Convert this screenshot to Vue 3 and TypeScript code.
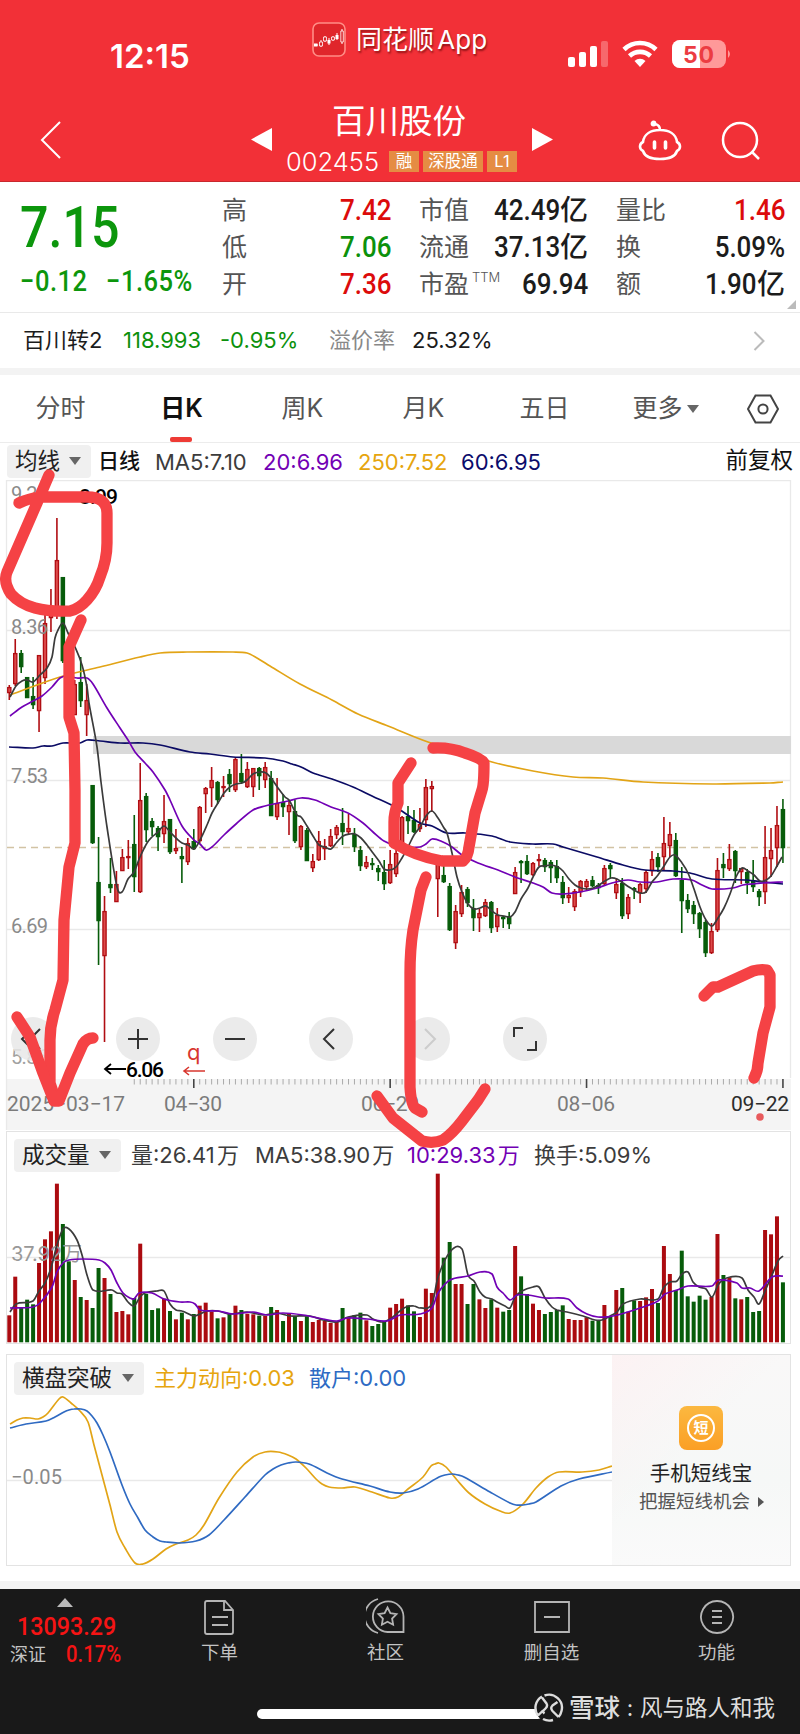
<template>
  <div class="page">
    <!-- 顶部红色区域 -->
    <header class="header">
      <div class="status-bar">
        <span class="clock">12:15</span>
        <div class="app-name">
          <svg width="34" height="35" viewBox="0 0 34 35">
            <rect x="1" y="1" width="32" height="33" rx="6" fill="#e0262b" stroke="#ff8d86" stroke-width="1.6" />
            <path d="M3 23h3M9 18v7M13 14v6M17 16v7M21 14v5M25 11v7M30 7v15" stroke="#fff" stroke-width="1" />
            <path d="M2 21.500h3.500v3H2zM15.500 18h3v3.500h-3zM23.500 13h3v4h-3z" fill="#fff" />
            <path d="M7.500 20h3v4h-3zM11.500 15h3v4h-3zM19.500 15h3v3h-3zM28.800 9h2.500v11h-2.500z" fill="#d9262b" stroke="#fff" stroke-width=".8" />
          </svg>
          <span>同花顺 App</span>
        </div>
        <svg class="signals" width="164" height="30" viewBox="0 0 164 30">
          <rect x="0" y="17" width="7" height="10" rx="2" fill="#fff" />
          <rect x="11" y="12" width="7" height="15" rx="2" fill="#fff" />
          <rect x="22" y="6" width="7" height="21" rx="2" fill="#fff" />
          <rect x="33" y="1" width="7" height="26" rx="2" fill="#f7686c" />
          <path d="M56 9.500a23 23 0 0 1 32 0M61.500 16a15.500 15.500 0 0 1 21 0" fill="none" stroke="#fff" stroke-width="4.600" />
          <path d="M72 27l-5.500-6a8 8 0 0 1 11 0z" fill="#fff" />
          <rect x="104" y="0" width="54" height="28" rx="8" fill="#f99" />
          <path d="M112 0h20v28h-20a8 8 0 0 1-8-8V8a8 8 0 0 1 8-8z" fill="#fff" />
          <path d="M160 10q4 4 0 8z" fill="#f99" />
          <text x="115" y="22.500" class="battery-text" textLength="31">50</text>
        </svg>
      </div>
      <div class="title-bar">
        <svg class="back" width="22" height="38" viewBox="0 0 22 38"><path d="M20 1L2 19l18 18" fill="none" stroke="#fff" stroke-width="2" /></svg>
        <svg class="prev" width="21" height="25" viewBox="0 0 21 25"><path d="M21 1v23L0 12.500z" fill="#fff" /></svg>
        <div class="stock">
          <div class="stock-name">百川股份</div>
          <div class="stock-code">
            <span class="code">002455</span>
            <i class="tag">融</i>
            <i class="tag wide">深股通</i>
            <i class="tag">L1</i>
          </div>
        </div>
        <svg class="next" width="21" height="25" viewBox="0 0 21 25"><path d="M0 1v23l21-11.500z" fill="#fff" /></svg>
        <svg class="robot" width="44" height="41" viewBox="0 0 44 41" fill="none" stroke="#fff" stroke-width="2.600">
          <path d="M22 10c-9 0-16 4-17 12-4 2-4 7 0 9 2 6 9 8 17 8s15-2 17-8c4-2 4-7 0-9-1-8-8-12-17-12zM22 10q0-5-5-6" />
          <circle cx="15.500" cy="3.500" r="1.600" fill="#fff" />
          <path d="M16.500 22v6M27.500 22v6" stroke-width="3.600" stroke-linecap="round" />
        </svg>
        <svg class="search" width="40" height="40" viewBox="0 0 40 40" fill="none" stroke="#fff" stroke-width="2.500">
          <circle cx="19" cy="19" r="17" /><path d="M31 31l7 7" />
        </svg>
      </div>
    </header>

    <!-- 行情数据 -->
    <section class="quote">
      <div class="price-box">
        <div class="price din">7.15</div>
        <div class="change"><span class="din">−0.12</span><span class="din">−1.65%</span></div>
      </div>
      <div v-for="(col, c) in stats" :key="c" class="stat-col">
        <div v-for="s in col" :key="s.label" class="stat">
          <span class="stat-label">{{ s.label }}<sup v-if="s.sup">{{ s.sup }}</sup></span>
          <span class="din stat-value" :class="s.tone">{{ s.value }}</span>
          <b v-if="s.unit" class="unit">{{ s.unit }}</b>
        </div>
      </div>
      <i class="corner"></i>
    </section>

    <section class="bond">
      <span>百川转2</span>
      <span class="down">118.993</span>
      <span class="down">-0.95%</span>
      <span class="muted">溢价率</span>
      <span>25.32%</span>
      <svg width="12" height="20" viewBox="0 0 12 20"><path d="M1.500 1l9 9-9 9" fill="none" stroke="#bbb" stroke-width="2" /></svg>
    </section>

    <nav class="tabs">
      <span v-for="t in tabs" :key="t" class="tab" :class="{ active: t === '日K' }">{{ t }}<i v-if="t === '更多'" class="caret small"></i></span>
      <svg width="32" height="30" viewBox="0 0 32 30" fill="none" stroke="#444" stroke-width="2">
        <path d="M8.500 1.500h15L31 15l-7.500 13.500h-15L1 15z" /><circle cx="16" cy="15" r="4.600" />
      </svg>
    </nav>

    <!-- 均线 -->
    <div class="ma-row">
      <span class="select">均线<i class="caret"></i></span>
      <span class="period">日线</span>
      <span class="c-dark">MA5:7.10</span>
      <span class="c-purple">20:6.96</span>
      <span class="c-gold">250:7.52</span>
      <span class="c-navy">60:6.95</span>
      <span class="adjust">前复权</span>
    </div>

    <!-- K线图 -->
    <section class="kline">
      <svg width="800" height="651" viewBox="0 480 800 651">
        <rect x="7" y="1079" width="784" height="51" fill="#f4f4f4" />
        <path d="M6.500 1130V480.500H790.500V1078M6.500 630.500H790M6.500 780.500H790M6.500 929.500H790" class="frame" />
        <rect x="93" y="736" width="698" height="18" fill="#d9d9d9" />
        <path d="M7 847.500H790" stroke="#d2c3a4" stroke-width="1.300" stroke-dasharray="7 5" />
        <g v-for="(k, i) in candles" :key="i" :stroke="k.color" :fill="k.fill">
          <path :d="`M${k.x} ${k.high}V${k.low}`" stroke-width="1.600" />
          <rect :x="k.x - 1.600" :y="k.top" width="3.200" :height="k.height" stroke-width="1.300" />
        </g>
        <g class="axis-label">
          <text x="11" y="501" textLength="37">9.20</text>
          <text x="11" y="633.500" textLength="37">8.36</text>
          <text x="11" y="783" textLength="37">7.53</text>
          <text x="11" y="932.500" textLength="37">6.69</text>
          <text x="11" y="1064" textLength="37" opacity=".8">5.86</text>
        </g>
        <path :d="smooth(ma250)" class="line gold" />
        <path :d="smooth(ma60)" class="line navy" />
        <path :d="smooth(ma20)" class="line purple" />
        <path :d="smooth(ma5)" class="line dark" />
        <text x="79" y="504" textLength="39" class="mark">8.99</text>
      </svg>
      <div class="tools">
        <button v-for="(d, i) in tools" :key="i" class="tool" :class="{ off: i === 4 }">
          <svg width="44" height="44" viewBox="0 0 44 44"><path :d="d" /></svg>
        </button>
      </div>
      <svg class="marks" width="800" height="651" viewBox="0 480 800 651">
        <path d="M105 1069h21M111 1064l-6 5 6 5" fill="none" stroke="#000" stroke-width="1.800" />
        <text x="126" y="1077" textLength="38" class="mark">6.06</text>
        <text x="187" y="1060" class="q-mark">q</text>
        <path d="M184 1071h21M189 1067l-5 4 5 4" fill="none" stroke="#d8372f" stroke-width="1.600" />
        <path v-for="t in ticks" :key="t.x" :d="`M${t.x} 1079v${t.major ? 9 : 5.500}`" :stroke="t.major ? '#444' : '#aaa'" :stroke-width="t.major ? 1.600 : 1" />
        <g class="date">
          <text x="7" y="1111" textLength="118">2025−03−17</text>
          <text x="164" y="1111" textLength="58">04−30</text>
          <text x="361" y="1111" textLength="58">06−20</text>
          <text x="557" y="1111" textLength="58">08−06</text>
          <text x="731" y="1111" textLength="58" class="today">09−22</text>
        </g>
      </svg>
    </section>

    <!-- 成交量 -->
    <section class="panel volume">
      <div class="panel-head vol-head">
        <span class="select">成交量<i class="caret"></i></span>
        <span class="c-dark">量:26.41 万</span>
        <span class="c-dark">MA5:38.90 万</span>
        <span class="c-purple">10:29.33 万</span>
        <span class="c-dark">换手:5.09%</span>
      </div>
      <svg class="plot" width="784" height="170" viewBox="7 1173 784 170">
        <path d="M7 1257.500H790" class="frame" />
        <rect v-for="(v, i) in volumes" :key="i" :x="v.x - 2" :y="v.y" width="4" :height="1342.300 - v.y" :fill="v.color" />
        <text x="11" y="1261" class="axis-num" textLength="71">37.92万</text>
        <path :d="smooth(volMa5)" class="line dark" />
        <path :d="smooth(volMa10)" class="line purple" />
      </svg>
    </section>

    <!-- 横盘突破 -->
    <section class="panel trend">
      <div class="trend-main">
        <div class="panel-head trend-head">
          <span class="select">横盘突破<i class="caret"></i></span>
          <span class="c-gold">主力动向:0.03</span>
          <span class="c-blue">散户:0.00</span>
        </div>
        <svg class="plot" width="605" height="169" viewBox="7 1396 605 169">
          <path d="M7 1480.500H612" class="frame" />
          <text x="11" y="1484" class="axis-label" textLength="51">−0.05</text>
          <path :d="smooth(mainForce)" class="line gold" />
          <path :d="smooth(retail)" class="line blue" />
        </svg>
      </div>
      <aside class="promo">
        <div class="promo-icon"><span>短</span></div>
        <div class="promo-title">手机短线宝</div>
        <div class="promo-sub">把握短线机会<i class="play"></i></div>
      </aside>
    </section>

    <!-- 底部导航 -->
    <footer class="footer">
      <div class="footer-row">
        <div class="index">
          <i class="rise"></i>
          <div class="index-value"><span class="din">13093.29</span></div>
          <div class="index-sub"><span>深证</span><span class="din pct">0.17%</span></div>
        </div>
        <div v-for="n in navs" :key="n.text" class="nav-item">
          <svg width="40" height="38" viewBox="0 0 40 38"><path :d="n.icon" /></svg>
          <span>{{ n.text }}</span>
        </div>
      </div>
      <div class="home-row">
        <i class="home-bar"></i>
        <div class="watermark">
          <svg width="30" height="30" viewBox="0 0 30 30">
            <circle cx="15" cy="14.500" r="14" class="disc" />
            <path d="M8 3.500A13 13 0 0 0 4 22.500M10.500 2.500A13 13 0 0 1 27.500 18M24.500 24A13 13 0 0 0 27.500 18M9 26A13 13 0 0 0 19 27M8 4.500L12.500 10.500Q14 13 11.500 15.500L9.500 17.500Q8.500 19 10.500 20.500M4 22.500L9 17.500M23.500 9L18.500 12.500Q16 15 18.500 18L24.500 24" />
          </svg>
          <b>雪球</b><span class="colon">:</span><span>风与路人和我</span>
        </div>
      </div>
    </footer>

    <!-- 手绘标注 -->
    <svg class="doodle" width="800" height="1160" viewBox="0 0 800 1160">
      <path v-for="d in strokes" :key="d" :d="d" />
      <circle cx="760" cy="1117" r="3.800" />
    </svg>
  </div>
</template>

<script setup lang="ts">
interface Stat {
  label: string
  value: string
  tone?: 'up' | 'down'
  unit?: string
  sup?: string
}

const stats: Stat[][] = [
  [
    { label: '高', value: '7.42', tone: 'up' },
    { label: '低', value: '7.06', tone: 'down' },
    { label: '开', value: '7.36', tone: 'up' }
  ],
  [
    { label: '市值', value: '42.49', unit: '亿' },
    { label: '流通', value: '37.13', unit: '亿' },
    { label: '市盈', value: '69.94', sup: 'TTM' }
  ],
  [
    { label: '量比', value: '1.46', tone: 'up' },
    { label: '换', value: '5.09%' },
    { label: '额', value: '1.90', unit: '亿' }
  ]
]

const tabs = ['分时', '日K', '周K', '月K', '五日', '更多']

// 每根K线的横坐标
const px = (i: number) => +(9.3 + i * 5.951).toFixed(2)

// 颜色, 最高, 实体上沿, 实体下沿, 最低
const rawCandles = `r685,687,693,700 r639,653,684,686 g650,653,667,673 g677,677,698,698 g677,696,705,709 r655,655,711,732
r613,623,678,684 r589,612,618,632 r518,560,612,619 g577,577,661,663 g655,670,700,710 r680,684,715,715 g657,682,701,707
r684,700,715,736 g785,785,843,844 g837,882,921,965 r896,911,956,1042 g858,884,888,893 r871,884,902,902 r849,857,871,871
r840,856,858,869 g815,844,877,892 r763,800,892,893 g793,796,830,842 g818,821,827,836 g826,828,837,851 r795,821,834,843
g819,819,852,854 r829,848,851,854 g847,856,859,883 r838,843,862,865 g829,841,849,850 r806,807,841,843 r787,788,794,813
r767,780,788,807 g781,782,800,804 r776,786,788,797 g769,774,784,792 r757,759,790,792 g754,773,782,784 r762,769,787,788
r768,768,787,797 g767,768,776,790 r762,767,780,788 g771,778,816,816 r778,803,817,820 g794,802,807,817 r801,805,812,835
g800,811,841,843 r825,826,847,850 g828,830,861,861 r854,861,868,872 r831,841,860,861 r839,846,849,860 r829,836,846,847
r825,827,835,839 g808,823,832,845 r814,828,832,835 g828,834,847,852 g846,850,866,871 r856,862,867,869 g858,863,864,870
g865,868,872,881 g860,872,884,890 r850,864,883,884 r845,853,874,877 r816,817,850,852 g806,816,821,834 g810,820,832,833
r808,824,829,832 r779,787,820,827 r781,786,789,812 r860,860,879,917 g862,875,882,883 g883,886,930,931 r905,911,943,949
r885,892,914,917 g887,889,903,907 g899,908,918,931 r909,913,918,932 r899,902,916,917 g901,902,928,933 r908,915,927,932
g916,917,919,928 g912,916,924,929 r867,872,894,894 g860,861,863,883 g855,861,874,875 r862,863,875,876 r854,859,861,866
g858,860,867,872 g860,862,868,883 g860,866,878,883 g876,882,898,904 r887,895,898,903 r889,891,907,911 r880,881,892,897
r879,881,887,890 g876,880,886,887 g883,885,888,894 r865,868,884,885 g863,865,869,878 r878,884,893,899 g878,883,916,919
r894,897,914,919 g887,888,890,899 r883,884,893,903 r870,872,889,893 r851,859,871,876 g853,857,867,872 r817,843,857,870
r822,834,846,857 g833,840,876,877 g867,880,901,933 g894,900,909,913 g901,905,914,924 g912,913,929,938 g920,922,953,957
r923,931,953,954 r858,870,930,932 g853,864,868,878 r844,859,869,871 g850,851,871,883 r868,868,872,884 g869,872,883,894
g860,880,887,892 g889,891,897,906 r826,857,892,904 r828,850,859,877 r806,825,848,867 g799,809,848,863`

const candles = rawCandles.split(/\s+/).map((s, i) => {
  const [high, top, bottom, low] = s.slice(1).split(',').map(Number)
  const red = s[0] === 'r'
  return {
    x: px(i),
    high,
    low,
    top: top + 0.6,
    height: Math.max(bottom - top - 1, 1),
    color: red ? '#b00d12' : '#075c0a',
    fill: red ? '#dc4a4a' : '#075c0a'
  }
})

// 成交量柱顶位置
const rawVolumes = `r571 r455 g548 g524 g538 r414 r343 r319 r176 g297 g409 r465 g516 r525 g549 g429 r459 g507 r561 r558 r568 g519
r356 g507 g555 g550 r521 g558 r583 g563 r583 g567 r542 r533 r560 g580 r577 g567 r542 g555 r566 r568 g572 r573 g546 r555
g588 r564 g573 r588 g574 r591 r585 r588 r594 r590 g549 r578 g570 g563 r586 g603 g597 g590 r548 r537 r521 g541 g559 r576
r491 r504 r146 g398 g351 r477 r477 g537 g477 r523 r549 g523 r548 g560 g555 r363 g454 g507 r536 r555 g567 g561 g555 g541
r582 r585 r585 r577 g587 g585 r540 g574 r495 g489 r560 g526 r528 r517 r492 g534 r363 r447 g495 g377 g514 g530 g512 g524
r516 r327 g450 r457 g520 r523 g516 g561 g558 r315 r328 r274 g472`

const volumes = rawVolumes.split(/\s+/).map((s, i) => ({
  x: px(i),
  y: 1125 + Number(s.slice(1)) / 3,
  color: s[0] === 'r' ? '#ab0b10' : '#075c0a'
}))

const ticks = Array.from({ length: 110 }, (_, n) => {
  const i = n + 21
  return { x: px(i), major: [31, 64, 97, 130].includes(i) }
})

// 折线转平滑曲线
const smooth = (points: string) => {
  const p = points.split(' ').map((s) => s.split(',').map(Number))
  let d = `M${p[0]}`
  for (let i = 0; i < p.length - 1; i++) {
    const a = p[Math.max(i - 1, 0)]
    const b = p[i]
    const c = p[i + 1]
    const e = p[Math.min(i + 2, p.length - 1)]
    const w = c[0] - b[0]
    const k1 = (c[1] - a[1]) / Math.max(c[0] - a[0], 1)
    const k2 = (e[1] - b[1]) / Math.max(e[0] - b[0], 1)
    d += `C${b[0] + w / 3},${(b[1] + (k1 * w) / 3).toFixed(1)} ${c[0] - w / 3},${(c[1] - (k2 * w) / 3).toFixed(1)} ${c}`
  }
  return d
}

const ma5 = '10,697 16,686 22,681 27,680 33,682 40,675 47,668 52,657 55,638 58,630 63,623 68,633 75,647 82,665 87,687 89,703 97,747 101,782 107,827 117,887 122,892 128,879 134,872 140,857 147,843 152,837 158,832 164,826 170,832 177,839 182,843 188,845 194,849 200,840 207,825 212,813 218,803 224,793 230,787 236,784 242,783 247,780 253,774 260,772 266,773 271,778 278,788 285,797 289,800 297,815 301,817 307,826 313,836 319,845 325,847 331,849 337,842 343,836 350,834 355,834 361,838 367,845 373,853 379,861 384,869 390,870 396,867 402,858 408,847 414,835 420,827 426,816 432,811 438,818 444,828 447,833 452,853 457,877 462,892 468,904 474,909 480,908 486,906 492,911 498,915 504,916 510,917 515,912 521,899 528,888 533,877 539,867 545,866 551,865 558,867 563,871 569,879 575,885 581,888 587,889 593,888 599,885 605,881 611,878 617,879 623,883 629,887 634,890 640,893 646,892 652,882 658,875 664,866 670,857 675,855 682,863 688,873 694,889 700,907 706,920 712,926 718,918 724,908 730,894 736,877 742,868 748,871 754,875 760,881 766,880 771,876 777,866 782,857'
const ma20 = '10,716 22,707 33,701 42,696 52,687 60,678 67,676 77,678 87,678 93,684 107,708 120,728 128,740 135,752 145,763 153,772 165,790 170,800 182,826 194,840 200,844 206,850 212,847 224,835 236,824 253,810 265,806 288,801 301,798 315,800 331,807 348,813 363,823 373,832 384,841 397,846 420,847 426,844 432,839 443,842 452,847 462,855 478,863 498,870 515,877 533,883 543,887 552,893 563,894 580,892 597,888 612,883 628,880 640,882 657,882 673,879 692,880 702,885 712,889 733,888 743,885 763,883 783,882'
const ma60 = '9,747 33,748 43,746 52,746 63,743 80,743 87,740 100,741 120,743 143,743 160,745 190,752 210,754 233,757 265,758 283,761 292,764 301,767 313,773 332,779 353,787 372,796 397,808 420,823 432,826 447,833 465,833 492,836 510,842 533,844 553,844 563,847 597,857 623,865 645,870 673,871 690,873 712,879 747,880 763,882 783,884'
const ma250 = '10,695 60,677 100,667 140,657 160,653 187,652 233,652 247,653 257,658 270,666 300,684 332,700 358,714 388,726 428,742 492,762 533,771 573,777 603,778 643,782 713,784 770,783 783,782'

const volMa5 = '10,1312 16,1304 33,1301 39,1291 45,1283 51,1268 57,1245 63,1229 69,1229 77,1240 82,1255 87,1275 93,1290 112,1290 117,1293 122,1294 128,1302 134,1306 140,1297 145,1293 157,1291 164,1291 170,1304 176,1310 182,1311 194,1316 200,1314 207,1311 218,1311 230,1314 247,1312 263,1315 277,1313 290,1316 310,1316 323,1320 337,1322 348,1317 367,1315 373,1319 382,1322 390,1319 400,1311 406,1307 414,1306 420,1308 432,1304 438,1277 450,1252 462,1249 468,1275 474,1281 480,1292 485,1297 492,1299 497,1302 505,1306 510,1308 515,1297 522,1291 533,1287 539,1287 545,1298 552,1307 557,1310 567,1312 583,1316 595,1320 602,1320 612,1315 617,1312 623,1304 640,1299 658,1299 664,1287 670,1282 677,1281 682,1274 688,1272 693,1282 699,1287 706,1289 712,1297 718,1285 723,1280 730,1277 742,1278 748,1290 754,1297 759,1304 765,1291 772,1275 778,1261 783,1256'
const volMa10 = '10,1308 33,1307 40,1303 52,1287 57,1272 63,1263 69,1260 83,1259 99,1260 105,1263 111,1270 117,1283 123,1293 130,1298 134,1299 139,1293 152,1293 164,1299 180,1302 190,1302 195,1304 200,1310 218,1311 233,1314 253,1312 267,1315 283,1313 303,1315 323,1319 337,1321 347,1318 367,1319 387,1321 400,1315 420,1314 432,1308 438,1293 450,1280 468,1276 480,1272 492,1274 497,1287 503,1293 510,1300 517,1295 528,1295 545,1298 568,1299 577,1308 587,1314 598,1317 613,1316 640,1308 658,1301 665,1294 677,1290 688,1286 712,1286 718,1280 737,1283 742,1288 750,1288 759,1291 772,1277 783,1276'

const mainForce = '10,1424 17,1420 23,1418 30,1418 38,1419 43,1417 48,1413 59,1399 63,1397 71,1403 79,1410 88,1422 94,1445 102,1475 110,1505 117,1532 125,1548 135,1563 143,1564 153,1559 166,1549 176,1544 188,1540 196,1535 204,1525 219,1498 237,1472 253,1457 265,1452 278,1452 288,1455 296,1459 306,1468 316,1479 322,1484 329,1487 342,1488 355,1487 372,1492 390,1498 398,1497 408,1489 423,1477 431,1466 435,1464 439,1463 446,1467 457,1480 469,1493 485,1504 500,1511 510,1513 523,1504 536,1488 548,1477 559,1472 582,1472 599,1470 612,1466'
const retail = '10,1428 26,1424 46,1421 55,1417 64,1412 69,1410 74,1409 81,1409 87,1411 92,1416 97,1423 103,1435 110,1452 122,1485 130,1504 138,1518 145,1530 153,1537 160,1541 166,1542 179,1543 196,1541 209,1535 224,1520 245,1497 265,1475 273,1469 281,1465 288,1463 296,1462 309,1464 327,1473 342,1479 370,1486 390,1492 403,1493 418,1489 439,1477 445,1475 452,1474 458,1475 464,1477 490,1492 510,1503 516,1505 523,1505 529,1504 536,1502 561,1486 579,1479 612,1472'

const tools = [
  'M19 14l-8 8 8 8M29 12L19 22l10 10',
  'M22 12v20M12 22h20',
  'M12 22h20',
  'M25 12L15 22l10 10',
  'M19 12l10 10-10 10',
  'M11 20v-9h9M24 33h9v-9'
]

const navs = [
  { text: '下单', icon: 'M7 4h18l8 9v22q0 2-2 2H7q-2 0-2-2V6q0-2 2-2zM24 4v9h9M12 20h16M12 28h16' },
  { text: '社区', icon: 'M12 2a17.500 17.500 0 0 0 0 34M37.500 35H21.500A15.300 15.300 0 1 1 37.500 19.500zM21.500 10.500l2.900 5.600 6.100 1-4.400 4.400 1 6.200-5.600-2.900-5.600 2.900 1-6.200-4.400-4.400 6.100-1z' },
  { text: '删自选', icon: 'M3 5h34v30H3zM12 20h16' },
  { text: '功能', icon: 'M20 4a16 16 0 1 0 .1 0zM15 14h10M15 20h10M15 26h10' }
]

const strokes = [
  'M49 475L37 503L7 572Q3 582 11 594Q20 604 35 608Q50 612 70 611Q79 609 87 600Q96 590 100 577Q107 560 107 543V513Q107 497 87 497H40Q30 498 19 503',
  'M81 620L69 647V717L74 733L75 790V843L69 867L64 920L63 980L55 1010Q50 1025 50 1040V1083L54 1095',
  'M17 1017L30 1037L43 1073L54 1101H59L70 1073L83 1044Q87 1038 93 1038',
  'M411 763L398 783V803Q394 812 394 822V843Q415 856 442 861H463Q468 857 469 847L475 813L482 790Q484 784 484 763Q481 758 465 753Q450 747 433 748',
  'M426 877L421 890L413 930Q410 950 410 973V1087Q411 1104 415 1108L422 1112',
  'M377 1096L393 1118L422 1141Q433 1144 443 1140Q452 1134 462 1121L478 1100L485 1089',
  'M704 996L713 987H718L753 971Q760 969 767 970L770 975V1007L763 1033L758 1063Q758 1071 754 1078'
]
</script>

<style>
body {
  background: #fff;
}
</style>

<style scoped>
.page {
  position: relative;
  width: 800px;
  height: 1734px;
  overflow: hidden;
  background: #fff;
  color: #1c1c1c;
  font-family: Inter, "Noto Sans CJK SC", sans-serif;
}

svg {
  display: block;
  flex: none;
}

i {
  font-style: normal;
}

/* 窄体数字 */
.din {
  display: inline-block;
  font-family: Roboto, "Noto Sans CJK SC", sans-serif;
  font-weight: 500;
  transform: scaleX(0.88);
  transform-origin: left center;
}

.up {
  color: #dc0b0b;
}

.down {
  color: #0c910c;
}

.c-dark { color: #3c3c3c; }
.c-purple { color: #7200b4; }
.c-gold { color: #e6a50e; }
.c-navy { color: #0b0b6b; }
.c-blue { color: #2e6bc4; }

.header {
  box-sizing: border-box;
  height: 182px;
  background: #f23037;
  border-bottom: 1px solid #c8282e;
  color: #fff;
}

.status-bar {
  display: grid;
  grid-template-columns: 202px 256px 164px;
  height: 90px;
  padding-left: 110px;
}

.clock {
  padding-top: 36px;
  font-size: 33px;
  font-weight: 600;
  line-height: 40px;
}

.app-name {
  display: flex;
  gap: 10px;
  padding-top: 22px;
  font-size: 26px;
  line-height: 35px;
  white-space: nowrap;
  word-spacing: -4px;
  text-shadow: 1px 2px 2px rgba(80, 0, 0, 0.6);
}

.signals {
  margin-top: 40px;
}

.battery-text {
  font-size: 23px;
  font-weight: 700;
  fill: #ec3c42;
}

.title-bar {
  display: flex;
  align-items: flex-start;
  height: 91px;
  padding-left: 40px;
}

.back { margin-top: 31px; }
.prev { margin: 37px 0 0 189px; }
.next { margin: 37px 0 0 0; }
.robot { margin: 30px 0 0 85px; }
.search { margin: 31px 0 0 39px; }

.stock {
  width: 260px;
}

.stock-name {
  padding: 8px 0 0 60px;
  font-size: 33.500px;
  line-height: 46px;
}

.stock-code {
  display: flex;
  align-items: center;
  gap: 4px;
  height: 35px;
  padding-left: 14px;
  text-align: center;
}

.code {
  width: 99px;
  font-size: 25.500px;
  font-weight: 300;
  text-align: left;
}

.tag {
  width: 30px;
  height: 21px;
  background: #e58c43;
  font-size: 16.500px;
  line-height: 21px;
}

.tag.wide {
  width: 60px;
}

.quote {
  position: relative;
  box-sizing: border-box;
  display: grid;
  grid-template-columns: 202px 169px 197px 197px;
  height: 131px;
  padding: 10px 0 0 20px;
  border-bottom: 1px solid #e9e9e9;
}

.stat-col + .stat-col {
  margin-left: 28px;
}

.price-box {
  color: #0c960c;
}

.price {
  height: 70px;
  font-size: 57px;
  line-height: 72px;
}

.change {
  display: flex;
  height: 40px;
  font-size: 29px;
  line-height: 39px;
  white-space: nowrap;
  letter-spacing: 0.6px;
}

.change span:first-child {
  width: 86px;
}

.stat {
  display: flex;
  height: 37px;
  line-height: 37px;
}

.stat-label {
  color: #555;
  font-size: 25px;
  white-space: nowrap;
}

.stat-label sup {
  position: relative;
  top: -11px;
  left: 3px;
  font-size: 13px;
  font-weight: 300;
  line-height: 0;
  vertical-align: baseline;
}

.stat-value {
  margin-left: auto;
  font-size: 29.500px;
  transform-origin: right center;
  white-space: nowrap;
}

.unit {
  font-size: 28px;
  font-weight: 500;
}

.corner {
  position: absolute;
  right: 4px;
  bottom: 3px;
  border-bottom: 9px solid #bbb;
  border-left: 9px solid transparent;
}

.bond {
  display: grid;
  grid-template-columns: 100px 97px 109px 83px 341px 12px;
  align-items: center;
  height: 55px;
  padding-left: 23px;
  font-size: 22px;
  line-height: 30px;
  white-space: nowrap;
}

.bond span {
  height: 31px;
}

.muted {
  color: #888;
}

.tabs {
  box-sizing: border-box;
  display: grid;
  grid-template-columns: repeat(6, 121px) 74px;
  place-items: center;
  height: 75px;
  border-top: 7px solid #f3f3f3;
  border-bottom: 1px solid #ececec;
}

.tab {
  position: relative;
  color: #555;
  font-size: 25px;
  line-height: 67px;
}

.active {
  color: #111;
  font-weight: 600;
}

.active::after {
  content: "";
  position: absolute;
  bottom: 0;
  left: 10px;
  width: 22px;
  height: 5px;
  border-radius: 2px;
  background: #ee3b35;
}

.caret {
  display: inline-block;
  border-top: 8px solid #666;
  border-right: 6px solid transparent;
  border-left: 6px solid transparent;
}

.caret.small {
  margin: 0 0 4px 4px;
}

.select {
  box-sizing: border-box;
  display: flex;
  align-items: center;
  justify-content: space-between;
  height: 33px;
  padding: 0 10px 2px 8px;
  border-radius: 4px;
  background: #f0f0f0;
  color: #222;
  font-size: 22.500px;
}

.ma-row {
  display: grid;
  grid-template-columns: 84px 64px 108px 95px 103px 90px 242px;
  align-items: center;
  height: 37px;
  padding-left: 7px;
  font-size: 22px;
  line-height: 30px;
  white-space: nowrap;
}

.period {
  padding: 0 0 2px 7px;
  color: #111;
  font-size: 21px;
  font-weight: 500;
}

.adjust {
  padding-bottom: 3px;
  color: #111;
  font-size: 22.500px;
  text-align: right;
}

.kline {
  position: relative;
  height: 651px;
}

.frame {
  fill: none;
  stroke: #e9e9e9;
  stroke-width: 1.3;
}

.line {
  fill: none;
  stroke-linejoin: round;
  stroke-width: 1.7;
}

.dark { stroke: #3b3b3b; }
.purple { stroke: #7100b5; }
.gold { stroke: #e2a416; }
.navy { stroke: #0b0b64; }
.blue { stroke: #2f6ac2; }

.axis-label {
  fill: #8a8a8a;
  font-family: Roboto, sans-serif;
  font-size: 20px;
}

.axis-num {
  fill: #999;
  font-size: 20px;
}

.mark {
  fill: #000;
  font-family: Roboto, sans-serif;
  font-size: 21px;
  font-weight: 500;
}

.q-mark {
  fill: #d8372f;
  font-size: 22px;
}

.date {
  fill: #7b7b7b;
  font-family: Roboto, sans-serif;
  font-size: 21px;
}

.today {
  fill: #2c2c2c;
}

.marks {
  position: absolute;
  top: 0;
  left: 0;
}

.tools {
  position: absolute;
  top: 537px;
  left: 11px;
  display: flex;
  gap: 52.800px;
}

.tool {
  width: 44px;
  height: 44px;
  padding: 0;
  border: 0;
  border-radius: 50%;
  background: rgba(232, 232, 232, 0.85);
}

.tool:first-child {
  margin-right: 8px;
}

.tool path {
  fill: none;
  stroke: #333;
  stroke-width: 2;
}

.tool.off path {
  stroke: #ccc;
}

.panel {
  box-sizing: border-box;
  width: 785px;
  margin-left: 6px;
  border: 1px solid #e3e3e3;
}

.panel-head {
  display: grid;
  align-items: end;
  box-sizing: border-box;
  height: 41px;
  padding: 0 0 1px 7px;
  font-size: 22px;
  line-height: 33px;
  white-space: nowrap;
  word-spacing: -4px;
}

.volume {
  height: 213px;
}

.vol-head {
  grid-template-columns: 117px 124px 152px 127px 130px;
}

.vol-head .select {
  width: 107px;
}

.trend {
  display: flex;
  height: 212px;
  margin-top: 10px;
}

.trend-main {
  width: 605px;
}

.trend-head {
  grid-template-columns: 140px 155px 120px;
}

.trend-head .select {
  width: 130px;
}

.promo {
  flex: 1;
  display: flex;
  flex-direction: column;
  align-items: center;
  background: linear-gradient(135deg, rgba(255, 236, 238, 0.5), transparent 45%), linear-gradient(#f9f8f8, #f6f8f7 60%, #fafafa);
}

.promo-icon {
  display: flex;
  align-items: center;
  justify-content: center;
  width: 44px;
  height: 44px;
  margin-top: 51px;
  border-radius: 8px;
  background: linear-gradient(#fbb840, #fb9f25);
}

.promo-icon span {
  width: 24px;
  height: 24px;
  border: 2px solid #fff;
  border-radius: 50%;
  color: #fff;
  font-size: 15px;
  font-weight: 700;
  line-height: 23px;
  text-align: center;
}

.promo-title {
  margin-top: 9px;
  color: #222;
  font-size: 20.500px;
  line-height: 30px;
}

.promo-sub {
  display: flex;
  align-items: center;
  gap: 8px;
  padding-left: 1px;
  color: #555;
  font-size: 18.500px;
  line-height: 25px;
}

.play {
  border-top: 5px solid transparent;
  border-bottom: 5px solid transparent;
  border-left: 6px solid #555;
}

.footer {
  box-sizing: border-box;
  height: 153px;
  margin-top: 15px;
  border-top: 8px solid #f3f3f3;
  background: #191919;
  color: #c4c4c4;
}

.footer-row {
  display: grid;
  grid-template-columns: 137px 165px 167px 165px 165px;
  height: 95px;
}

.index {
  padding: 9px 0 0 10px;
}

.rise {
  display: block;
  width: 0;
  margin-left: 47px;
  border-right: 8px solid transparent;
  border-bottom: 9px solid #bbb;
  border-left: 8px solid transparent;
}

.index-value {
  height: 36px;
  margin-left: 7px;
  color: #f51414;
  font-size: 26.500px;
  line-height: 37px;
}

.index-sub {
  display: flex;
  height: 24px;
  font-size: 18px;
  line-height: 24px;
}

.index-sub span:first-child {
  width: 56px;
}

.index-sub .pct {
  color: #f51414;
  font-size: 23px;
}

.nav-item {
  display: flex;
  flex-direction: column;
  align-items: center;
  padding-top: 8px;
  font-size: 18.500px;
  line-height: 28px;
}

.nav-item svg {
  margin-bottom: 3px;
}

.nav-item path {
  fill: none;
  stroke: #b5b5b5;
  stroke-width: 1.8;
}

.home-row {
  display: flex;
  align-items: center;
  height: 50px;
  padding-left: 257px;
}

.home-bar {
  width: 286px;
  height: 10px;
  margin-top: 9px;
  border-radius: 5px;
  background: #fff;
}

.watermark {
  display: flex;
  align-items: center;
  margin: -2px 0 0 -9px;
  color: #ddd;
  font-size: 22.500px;
  line-height: 40px;
  white-space: nowrap;
}

.watermark path {
  fill: none;
  stroke: #ddd;
  stroke-width: 2.4;
}

.disc {
  fill: #191919;
}

.watermark b {
  margin-left: 5px;
  font-size: 25.500px;
  font-weight: 500;
}

.colon {
  width: 20px;
  text-align: center;
}

.doodle {
  position: absolute;
  top: 0;
  left: 0;
  pointer-events: none;
}

.doodle path {
  fill: none;
  stroke: #f54245;
  stroke-width: 11.3;
  stroke-linecap: round;
  stroke-linejoin: round;
}

.doodle circle {
  fill: #e85a5c;
}
</style>
